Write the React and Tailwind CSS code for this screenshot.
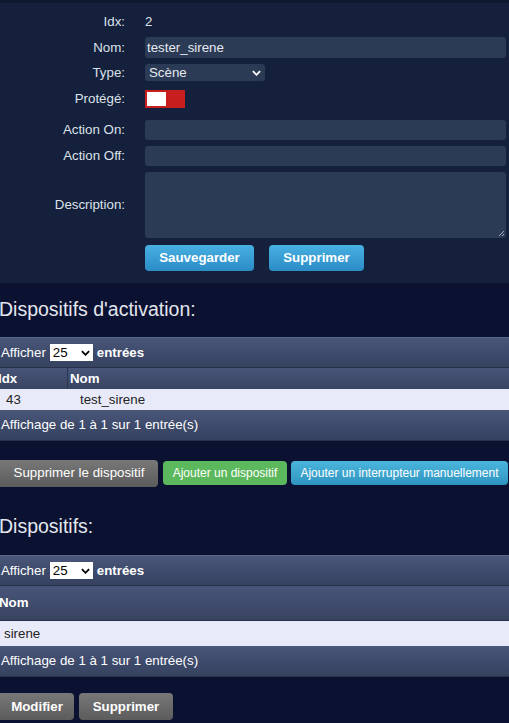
import React from "react";

const font = { fontFamily: '"Liberation Sans", Arial, sans-serif' };

function Chevron({ className = "" }) {
  return (
    <svg viewBox="0 0 10 6" className={className} width="9" height="6">
      <path d="M1 1l4 4 4-4" fill="none" stroke="currentColor" strokeWidth="2" />
    </svg>
  );
}

function Row({ label, children, cls }) {
  return (
    <div className={`flex items-center ${cls}`}>
      <div className="w-[125px] text-right text-[13.3px] text-[#dde2ea]">{label}</div>
      <div className="ml-[20px] flex-1 pr-[3px] h-full flex items-center">{children}</div>
    </div>
  );
}

function Toolbar() {
  return (
    <div className="h-[31px] flex items-center text-[13.3px] text-white bg-gradient-to-b from-[#4a5778] via-[#3e4b6c] to-[#36425f] border-t border-[#5a6685] border-b border-b-[#27314a]">
      <span className="pl-[1px]">Afficher</span>
      <span className="ml-[4px] bg-white text-black h-[17px] w-[43px] flex items-center justify-between px-[3px]">
        <span>25</span>
        <Chevron className="text-black" />
      </span>
      <span className="ml-[4px] font-bold">entrées</span>
    </div>
  );
}

function Footer() {
  return (
    <div className="h-[31px] flex items-center text-[13.3px] text-white bg-gradient-to-b from-[#4a5778] via-[#3e4b6c] to-[#36425f] border-b border-[#27314a]">
      <span className="pl-[1px]">Affichage de 1 à 1 sur 1 entrée(s)</span>
    </div>
  );
}

export default function App() {
  return (
    <div style={font} className="w-[509px] h-[723px] bg-[#0b1130] overflow-hidden text-[13.3px]">
      <div className="bg-[#14203c] pt-[9px] pb-[12px] border-t-[3px] border-[#0e1830]">
        <Row label="Idx:" cls="h-[20px]"><span className="text-[#dde2ea]">2</span></Row>
        <Row label="Nom:" cls="h-[21px] mt-[5px]">
          <div className="w-full h-[21px] rounded-[3px] bg-[#2b3a55] flex items-center px-[2px] text-[#e6eaf0]">tester_sirene</div>
        </Row>
        <Row label="Type:" cls="h-[17px] mt-[6px]">
          <div className="w-[120px] h-[17px] rounded-[3px] bg-[#2b3a55] flex items-center justify-between px-[4px] text-[#e6eaf0]">
            <span>Scène</span>
            <Chevron className="text-white" />
          </div>
        </Row>
        <Row label="Protégé:" cls="h-[18px] mt-[9px]">
          <div className="w-[40px] h-[18px] bg-[#c81e1e] flex items-center pl-[2px]">
            <div className="w-[19px] h-[14px] bg-white" />
          </div>
        </Row>
        <Row label="Action On:" cls="h-[20px] mt-[12px]">
          <div className="w-full h-[20px] rounded-[3px] bg-[#2b3a55]" />
        </Row>
        <Row label="Action Off:" cls="h-[20px] mt-[6px]">
          <div className="w-full h-[20px] rounded-[3px] bg-[#2b3a55]" />
        </Row>
        <Row label="Description:" cls="h-[66px] mt-[6px]">
          <div className="w-full h-[66px] rounded-[3px] bg-[#2b3a55] relative">
            <svg className="absolute right-[1px] bottom-[1px]" width="8" height="8" viewBox="0 0 8 8">
              <path d="M7 2L2 7M7 5L5 7" stroke="#aab" strokeWidth="1" />
            </svg>
          </div>
        </Row>
        <div className="flex ml-[145px] mt-[7px] gap-[15px]">
          <button className="w-[109px] h-[26px] rounded-[4px] bg-gradient-to-b from-[#48b0e2] to-[#2b8cc6] text-white font-bold">Sauvegarder</button>
          <button className="w-[95px] h-[26px] rounded-[4px] bg-gradient-to-b from-[#48b0e2] to-[#2b8cc6] text-white font-bold">Supprimer</button>
        </div>
      </div>

      <div className="h-[54px] flex items-center text-[19.5px] text-[#e3e6ee] -ml-[1px]">Dispositifs d'activation:</div>
      <Toolbar />
      <div className="flex h-[21px] items-center text-white font-bold bg-gradient-to-b from-[#48557a] to-[#38445f]">
        <div className="w-[70px] h-full flex items-center border-r border-[#2a3550] -ml-[2px]">Idx</div>
        <div className="pl-[2px]">Nom</div>
      </div>
      <div className="flex h-[21px] items-center text-[#222] bg-[#e9eaf9]">
        <div className="w-[70px] pl-[6px]">43</div>
        <div className="pl-[10px]">test_sirene</div>
      </div>
      <Footer />

      <div className="flex items-center gap-[4px] mt-[18px] h-[28px]">
        <button className="w-[158px] h-[27px] rounded-r-[4px] bg-gradient-to-b from-[#787878] to-[#5c5c5c] text-white">Supprimer le dispositif</button>
        <button className="ml-[1px] w-[124px] h-[24px] rounded-[4px] bg-[#5cb85c] text-white text-[12px]">Ajouter un dispositif</button>
        <button className="w-[217px] h-[24px] rounded-[4px] bg-gradient-to-b from-[#4bb5dc] to-[#2e95c0] text-white text-[12px]">Ajouter un interrupteur manuellement</button>
      </div>

      <div className="h-[68px] pt-[12px] flex items-center text-[19.5px] text-[#e3e6ee] -ml-[1px]">Dispositifs:</div>
      <Toolbar />
      <div className="flex h-[35px] items-center text-white font-bold bg-gradient-to-b from-[#48557a] to-[#38445f] border-b border-[#27314a]">
        <div className="-ml-[1px]">Nom</div>
      </div>
      <div className="flex h-[25px] items-center text-[#222] bg-[#e9eaf9]">
        <div className="pl-[4px]">sirene</div>
      </div>
      <Footer />

      <div className="flex gap-[5px] mt-[16px]">
        <button className="w-[74px] h-[27px] rounded-r-[4px] bg-gradient-to-b from-[#787878] to-[#5c5c5c] text-white font-bold">Modifier</button>
        <button className="w-[94px] h-[27px] rounded-[4px] bg-gradient-to-b from-[#787878] to-[#5c5c5c] text-white font-bold">Supprimer</button>
      </div>
    </div>
  );
}
